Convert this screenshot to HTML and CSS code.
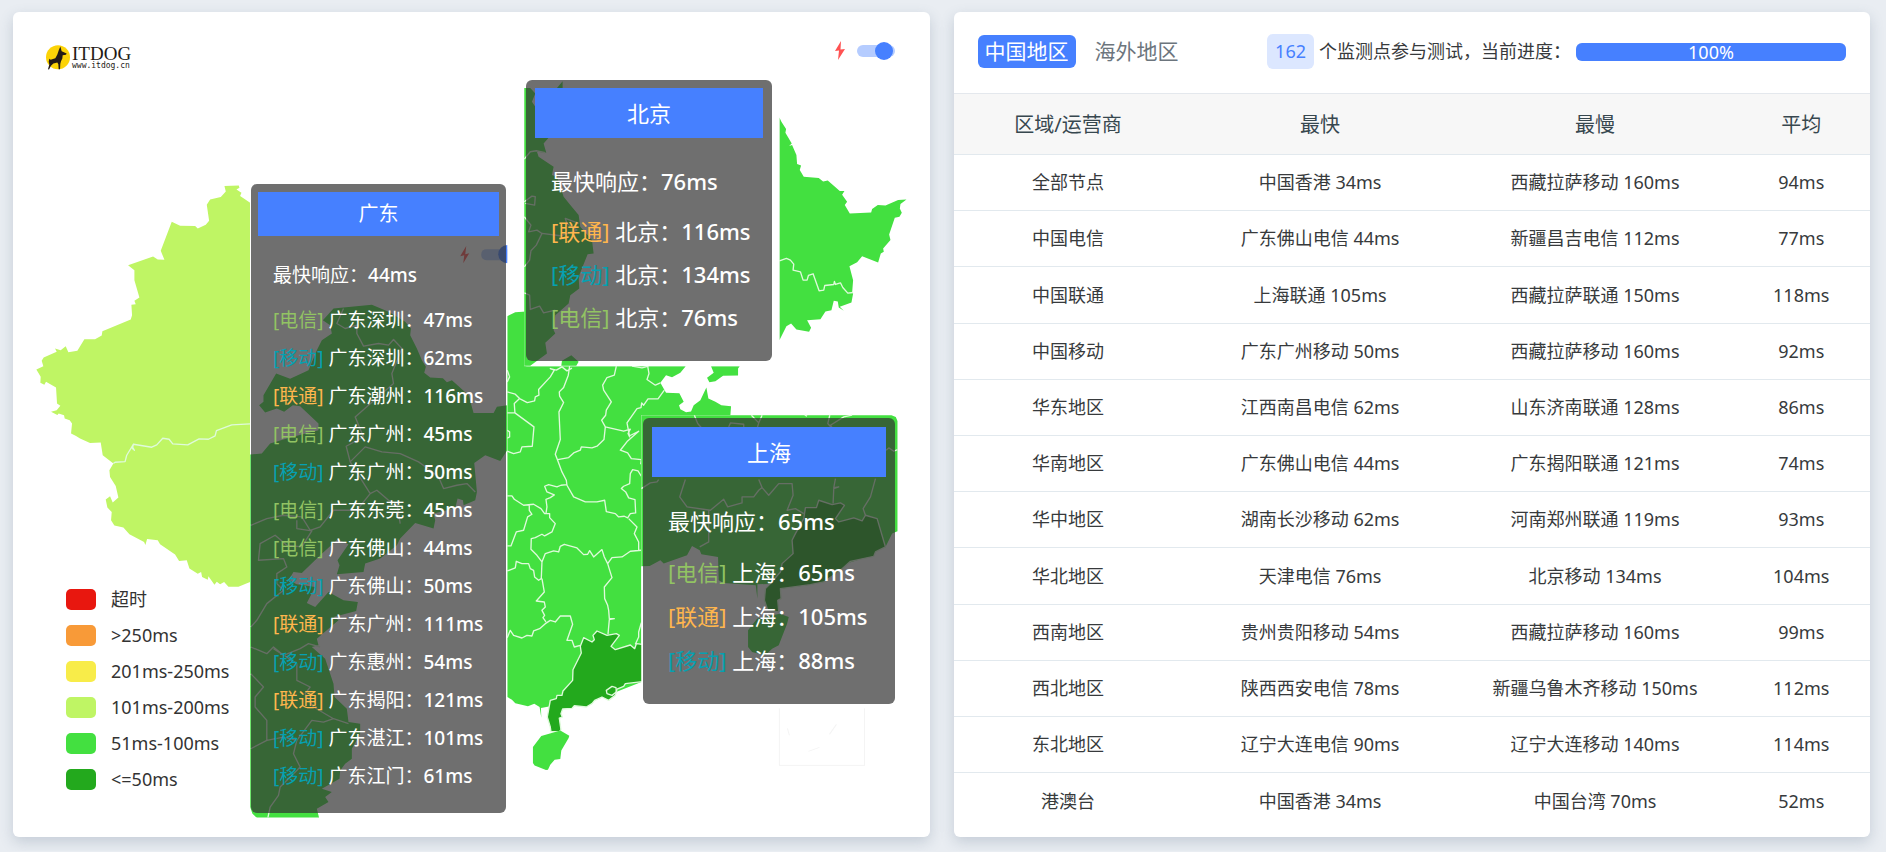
FILE: index.html
```html
<!DOCTYPE html>
<html lang="zh-CN">
<head>
<meta charset="utf-8">
<title>ITDOG</title>
<link rel="stylesheet" href="styles.css">
</head>
<body>
<main class="page">
  <section class="card map-card">
    <svg class="map" viewBox="13 12 916 824" aria-hidden="true">
      <defs>
        <clipPath id="clip-south"><rect x="250" y="184" width="257" height="633"/></clipPath>
      </defs>

      <!-- West -->
      <g transform="scale(.33333)">
        <path class="lime" d="M750,608 L720,588 724,578 709,568 718,563 716,556 673,558 677,574 662,591 630,598 620,614 627,662 617,674 593,685 585,678 540,677 515,665 482,752 493,779 473,778 459,769 384,795 403,810 403,840 418,892 403,902 407,912 394,914 396,945 392,958 307,993 305,1006 285,1017 253,1017 232,1052 205,1056 197,1038 182,1050 165,1045 170,1055 131,1072 125,1082 130,1098 109,1108 122,1130 121,1148 133,1154 138,1145 168,1162 171,1210 181,1217 170,1230 153,1235 172,1244 176,1240 192,1245 194,1255 209,1260 216,1270 213,1300 228,1307 240,1315 270,1328 302,1327 308,1365 340,1390 328,1410 330,1430 347,1457 355,1492 338,1507 330,1488 317,1498 322,1522 335,1535 333,1560 343,1576 370,1582 388,1602 432,1625 436,1634 441,1616 473,1620 480,1632 525,1663 537,1682 560,1680 568,1705 593,1720 603,1715 606,1730 623,1738 625,1728 643,1753 650,1744 660,1752 672,1745 685,1759 715,1759 735,1751 750,1745Z"/>
        <path class="edge" d="M340,1390 L345,1386 375,1384 380,1365 400,1332 397,1345 403,1350 397,1340 400,1332 455,1341 470,1334 488,1314 507,1317 518,1331 563,1334 597,1316 625,1317 645,1307 649,1291 695,1274 750,1271"/>
      </g>

      <!-- North-east -->
      <g transform="translate(500 60) scale(.33333)">
        <path class="green" d="M837,172 L843,185 857,207 855,218 874,250 866,258 875,255 888,285 890,312 902,316 898,330 910,350 955,354 968,364 982,361 1018,393 1032,393 1025,404 1040,425 1033,435 1048,460 1112,457 1115,447 1132,435 1155,436 1193,420 1218,418 1200,432 1198,445 1204,458 1197,470 1183,473 1166,523 1170,540 1148,565 1150,575 1141,580 1133,607 1085,588 1070,606 1047,618 1058,660 1055,698 1058,700 1053,727 1018,740 1030,752 1015,742 1012,724 1000,722 993,750 975,754 960,777 920,780 932,803 926,815 888,808 872,790 858,798 837,840Z"/>
        <path class="edge" d="M837,602 L858,595 870,600 880,612 878,630 900,635 908,660 920,660 924,646 938,641 956,692 970,690 973,676 1000,673 1002,664 1005,673 1020,668 1027,682 1042,699 1058,697"/>
        <path class="green" d="M632,918 L640,938 620,953 627,966 645,963 668,947 713,946 713,925 718,918Z"/>
      </g>

      <!-- Centre and south -->
      <g transform="translate(500 350) scale(.33333)">
        <path class="green" d="M21,-102 L45,-114 78,-116 78,48 556,48 540,68 515,81 497,75 480,98 497,128 537,129 550,155 536,165 540,177 557,186 572,184 580,165 600,150 618,112 624,145 645,155 663,165 692,168 690,195 423,195 423,995 258,1060 150,1068 122,1073 123,1102 118,1070 102,1060 83,1068 45,1059 35,1048 21,1040Z"/>
        <path class="dark edged" d="M426,882 L408,880 403,895 390,884 345,898 332,888 357,855 348,850 320,855 290,842 278,855 282,868 275,875 250,862 240,888 243,908 218,958 217,990 188,1022 185,1035 170,1035 168,1045 150,1050 141,1100 150,1130 152,1144 178,1143 182,1138 177,1103 186,1100 182,1090 187,1076 215,1074 222,1066 258,1070 275,1060 283,1050 305,1040 325,1050 345,1035 350,1016 370,1008 375,1000 426,994Z"/>
        <path class="green" d="M180,1140 L207,1156 205,1163 183,1200 180,1226 163,1228 150,1243 143,1258 137,1259 103,1245 98,1238 98,1190 123,1157Z"/>
        <path class="edge" d="M21,125 L45,132 58,145 81,157 103,152 105,140 116,135 115,118 150,80 162,60 150,55 168,60 185,50 200,62 215,54
          M208,48 L204,75 190,112 177,125 178,138 190,157 176,185 180,268 165,312 172,330 185,365 198,390 200,405 220,440 255,455 290,455 313,450 318,484 345,490 355,500 372,498 382,503 390,490 406,488 404,448 385,443 376,425 363,415 370,408 388,400 390,370 397,358 413,362 423,378
          M348,48 L342,75 320,82 307,105 310,120 333,155 318,180 316,195 304,210 315,230 311,268 290,288 275,293 243,290 240,300 220,308 205,322 172,328
          M315,230 L370,243 390,237 383,250 388,260 380,218 410,175 422,172 424,158 430,165 443,146 473,146 492,120
          M385,258 L415,243 382,272 360,300 382,308 393,325 423,328 421,342
          M58,145 L42,160 44,188 21,188 M44,188 L101,230 96,288 65,290 60,305 40,310 21,303
          M21,240 L28,245 28,260 21,264 M21,60 L28,80 21,95
          M200,403 L182,405 170,410 145,403 133,408 140,425 162,434 150,442 137,447 140,470 137,490
          M21,437 L35,437 42,447 70,465 100,462 122,475 133,490 148,490 148,502 165,520 155,545 133,557 125,552 105,562 93,565 92,597 110,615 125,635
          M87,465 L87,480 95,492 82,500 70,540 48,545 32,587 21,587
          M21,662 L45,653 48,633 65,640 85,640 90,655 100,660 103,680 115,690 123,685 125,635 135,610 160,602 175,605 180,588 192,582 230,593 250,613 262,612 268,601 280,620 305,598 312,620 322,640 335,622 365,620 390,603 423,600
          M385,505 L410,530 402,550 415,575 415,600
          M322,640 L335,682 312,710 313,745 322,765 325,780 327,805 342,805 327,808 323,852
          M125,685 L132,725 108,752 132,755 135,770 125,780 133,795 128,802 137,815
          M21,862 L30,840 40,855 65,863 80,855 95,857 100,842 118,835 135,820 150,810 165,815 180,797 210,797 217,822 200,870 215,870 222,890 240,885
          M423,817 L415,845 415,860 405,882
          M442,48 L446,70 440,88 465,105 480,98 M395,48 L425,53 445,48
          M320,1030 L318,1020 335,1008 347,1012 348,1025 335,1035Z"/>
      </g>

      <!-- Islands inset -->
      <rect class="inset" x="779" y="700" width="85" height="65"/>
      <path class="inset" d="M787,728 l2,7 M836,724 l-7,10 M808,751 l11,-4"/>

      <!-- Guangdong view -->
      <rect class="blank" x="250" y="184" width="257" height="633"/>
      <g clip-path="url(#clip-south)">
        <g transform="scale(.33333)">
          <path class="green" d="M1115,914 L1165,935 1215,965 1232,985 1230,1005 1250,1045 1265,1080 1277,1100 1272,1118 1290,1132 1328,1134 1340,1146 1355,1140 1405,1185 1420,1238 1480,1238 1490,1220 1521,1215 1521,1350 1500,1382 1455,1365 1422,1388 1430,1475 1425,1500 1390,1515 1388,1500 1372,1495 1366,1520 1340,1530 1300,1540 1305,1560 1300,1585 1245,1568 1200,1615 1190,1635 1140,1675 1095,1690 1090,1715 1010,1722 1018,1695 1012,1680 1045,1632 1012,1618 960,1665 905,1718 880,1715 865,1740 890,1752 945,1760 920,1808 945,1820 985,1775 1030,1800 1073,1805 1068,1832 1000,1850 1015,1860 950,1915 955,1935 935,1940 975,1975 1000,2050 1003,2090 1040,2125 1045,2165 1080,2170 1080,2200 1055,2245 1055,2275 1035,2290 1020,2310 1018,2335 965,2365 995,2375 975,2390 985,2405 950,2425 957,2453 771,2453 757,2440 750,2420 750,1363 785,1360 810,1330 870,1312 955,1290 955,1270 900,1218 878,1215 852,1235 830,1225 795,1237 777,1215 790,1205 790,1185 828,1120 870,1136 925,1110 950,1050 965,1020 995,1000 990,975 968,960 1000,925 1030,922Z"/>
          <path class="edge" d="M1030,925 L1010,970 1035,985 1070,975 1070,1000 1090,1038 1135,1030 1165,1035 1180,1018 1205,1045 1175,1120 1180,1150 1105,1215 1065,1250 1090,1310 1038,1338 1050,1385 1095,1340 1145,1355 1200,1360 1255,1385 1290,1410 1315,1430 1330,1465 1370,1455 1400,1450 1425,1475
            M1050,1385 L1110,1480 1130,1470 1165,1500 1190,1510 1200,1570
            M1110,1480 L1070,1530 1000,1530 960,1580 930,1590 905,1550 850,1545 800,1555 752,1575
            M890,1560 L890,1585 935,1592 905,1640 860,1635 825,1605 780,1630 775,1680 850,1675 860,1700 830,1720 830,1750 850,1770 800,1810 770,1860 752,1880
            M752,1940 L800,1960 820,1940 850,1965 900,1945 925,1930 960,1940
            M820,1945 L890,1990 890,2040 930,2060 915,2080 940,2120 1000,2155 1045,2170
            M752,2020 L790,2060 765,2090 765,2120 800,2160 800,2220 752,2245
            M800,2220 L850,2210 890,2220 935,2160 970,2165 1000,2155
            M890,2220 L880,2260 900,2300 880,2320 840,2360 835,2385 810,2420 803,2453"/>
        </g>
        <rect class="track" x="481" y="249" width="36" height="11" rx="5"/>
        <circle class="knob" cx="507" cy="254" r="9"/>
        <path class="bolt" d="M466,246 L460,256 464,255 463,263 469,253 465,254Z"/>
      </g>

      <!-- Beijing view -->
      <rect class="blank" x="524" y="80" width="255" height="286"/>
      <g transform="translate(500 60) scale(.33333)">
        <path class="green" d="M72,84 L90,84 105,100 95,125 105,140 105,230 145,233 130,250 138,278 110,275 115,290 160,320 155,345 170,350 190,410 210,435 235,465 240,500 275,540 280,580 262,582 235,650 237,685 210,705 205,730 165,765 160,810 165,820 135,848 140,880 90,917 72,917Z M170,84 L187,64 187,90Z M183,917 L185,902 213,885 235,905 228,917Z"/>
        <path class="edge" d="M72,297 L90,275 108,272 135,278 M72,425 L95,408 105,410 103,435 75,430 M72,470 L92,495 85,515 110,510 125,520 108,555 92,572 88,600 72,620 M72,698 L88,705 90,748 118,738 130,758 165,750 M125,520 L180,527 230,510 200,490 195,475 235,490"/>
      </g>

      <!-- Shanghai view -->
      <rect class="blank" x="641" y="415" width="256" height="293"/>
      <g transform="translate(490 400) scale(.33333)">
        <path class="green" d="M453,45 L1203,45 1216,50 1221,62 1221,393 1205,400 1185,440 1100,480 870,550 801,552 801,595 796,555 700,548 685,540 683,470 633,462 628,450 605,437 590,465 520,490 510,480 478,497 453,498Z"/>
        <path class="dark edged" d="M1185,440 L1160,355 1125,345 1115,362 1090,353 1045,365 1035,355 1062,315 1050,308 1025,313 985,300 978,322 945,322 940,355 915,400 905,420 908,460 875,490 870,515 840,550 825,565 822,600 832,630 865,635 862,600 872,595 870,565 960,553 1000,545 1050,510 1080,483 1150,468 1155,455Z"/>
        <path class="green" d="M868,640 L895,650 890,670 865,735 845,745 825,765 785,755 773,740 773,690 800,655Z"/>
        <path class="edge" d="M612,45 L622,70 635,85 M715,80 L720,68 760,72 760,82 M783,45 L805,68 800,85 M805,68 L815,45 M1085,45 L1060,50 1020,75 1030,90 1012,70 1018,45 M943,45 L950,48 M1187,150 L1195,143 1210,153 1221,148
          M453,265 L480,248 500,245 505,238 M585,238 L568,290 590,320 660,330 700,297 712,320 755,308 755,290 790,290 805,270 815,262 805,238 M815,262 L835,285 865,250 905,250 908,285 890,330 915,325 940,340 M1035,235 L1030,262 1045,260 1030,265 1028,310 M1155,235 L1140,290 1118,325 1125,345 M655,330 L655,425 628,440"/>
      </g>
    </svg>

    <a class="logo" href="#">
      <svg class="logo-mark" viewBox="0 0 72 74" aria-hidden="true">
        <circle cx="36" cy="36" r="36" fill="#fcd307"/>
        <path fill="#231a16" d="M43,4 L47,18 62,25 60,29 50,30 49,40 45,48 43,56 42,72 38,72 37,57 34,52 22,55 15,62 9,73 6,72 10,58 8,50 10,41 14,44 28,39 34,28 38,16Z"/>
      </svg>
      <span class="logo-text"><span class="logo-name">ITDOG</span><span class="logo-url">www.itdog.cn</span></span>
    </a>

    <label class="fast-toggle">
      <svg class="fast-icon" viewBox="0 0 10 20" aria-hidden="true"><path class="bolt" d="M6,0 L0,10 4,9.500 3,19 10,8 5.500,8.500Z"/></svg>
      <input class="switch" type="checkbox" role="switch" aria-label="快速模式" checked>
    </label>

    <ul class="legend">
      <li class="legend-item"><span class="swatch swatch-timeout"></span>超时</li>
      <li class="legend-item"><span class="swatch swatch-250"></span>&gt;250ms</li>
      <li class="legend-item"><span class="swatch swatch-201"></span>201ms-250ms</li>
      <li class="legend-item"><span class="swatch swatch-101"></span>101ms-200ms</li>
      <li class="legend-item"><span class="swatch swatch-51"></span>51ms-100ms</li>
      <li class="legend-item"><span class="swatch swatch-50"></span>&lt;=50ms</li>
    </ul>

    <div class="tip tip-guangdong">
      <h2 class="tip-title">广东</h2>
      <p class="tip-best">最快响应：<b>44ms</b></p>
      <ul class="tip-list">
        <li><span class="dx">[电信]</span> 广东深圳：<b>47ms</b></li>
        <li><span class="yd">[移动]</span> 广东深圳：<b>62ms</b></li>
        <li><span class="lt">[联通]</span> 广东潮州：<b>116ms</b></li>
        <li><span class="dx">[电信]</span> 广东广州：<b>45ms</b></li>
        <li><span class="yd">[移动]</span> 广东广州：<b>50ms</b></li>
        <li><span class="dx">[电信]</span> 广东东莞：<b>45ms</b></li>
        <li><span class="dx">[电信]</span> 广东佛山：<b>44ms</b></li>
        <li><span class="yd">[移动]</span> 广东佛山：<b>50ms</b></li>
        <li><span class="lt">[联通]</span> 广东广州：<b>111ms</b></li>
        <li><span class="yd">[移动]</span> 广东惠州：<b>54ms</b></li>
        <li><span class="lt">[联通]</span> 广东揭阳：<b>121ms</b></li>
        <li><span class="yd">[移动]</span> 广东湛江：<b>101ms</b></li>
        <li><span class="yd">[移动]</span> 广东江门：<b>61ms</b></li>
      </ul>
    </div>

    <div class="tip tip-large tip-beijing">
      <h2 class="tip-title">北京</h2>
      <p class="tip-best">最快响应：<b>76ms</b></p>
      <ul class="tip-list">
        <li><span class="lt">[联通]</span> 北京：<b>116ms</b></li>
        <li><span class="yd">[移动]</span> 北京：<b>134ms</b></li>
        <li><span class="dx">[电信]</span> 北京：<b>76ms</b></li>
      </ul>
    </div>

    <div class="tip tip-large tip-shanghai">
      <h2 class="tip-title">上海</h2>
      <p class="tip-best">最快响应：<b>65ms</b></p>
      <ul class="tip-list">
        <li><span class="dx">[电信]</span> 上海：<b>65ms</b></li>
        <li><span class="lt">[联通]</span> 上海：<b>105ms</b></li>
        <li><span class="yd">[移动]</span> 上海：<b>88ms</b></li>
      </ul>
    </div>
  </section>

  <section class="card result-card">
    <header class="result-head">
      <nav class="tabs">
        <button class="tab tab-active" type="button">中国地区</button>
        <button class="tab" type="button">海外地区</button>
      </nav>
      <div class="status">
        <span class="count">162</span>
        <span class="status-text" id="status-text">个监测点参与测试，当前进度：</span>
        <div class="progress" role="progressbar" aria-labelledby="status-text" aria-valuenow="100" aria-valuemin="0" aria-valuemax="100"><div class="progress-bar" style="width:100%">100%</div></div>
      </div>
    </header>
    <table class="result-table">
      <thead>
        <tr><th class="col-region">区域/运营商</th><th class="col-time">最快</th><th class="col-time">最慢</th><th class="col-avg">平均</th></tr>
      </thead>
      <tbody>
        <tr><td>全部节点</td><td>中国香港 34ms</td><td>西藏拉萨移动 160ms</td><td>94ms</td></tr>
        <tr><td>中国电信</td><td>广东佛山电信 44ms</td><td>新疆昌吉电信 112ms</td><td>77ms</td></tr>
        <tr><td>中国联通</td><td>上海联通 105ms</td><td>西藏拉萨联通 150ms</td><td>118ms</td></tr>
        <tr><td>中国移动</td><td>广东广州移动 50ms</td><td>西藏拉萨移动 160ms</td><td>92ms</td></tr>
        <tr><td>华东地区</td><td>江西南昌电信 62ms</td><td>山东济南联通 128ms</td><td>86ms</td></tr>
        <tr><td>华南地区</td><td>广东佛山电信 44ms</td><td>广东揭阳联通 121ms</td><td>74ms</td></tr>
        <tr><td>华中地区</td><td>湖南长沙移动 62ms</td><td>河南郑州联通 119ms</td><td>93ms</td></tr>
        <tr><td>华北地区</td><td>天津电信 76ms</td><td>北京移动 134ms</td><td>104ms</td></tr>
        <tr><td>西南地区</td><td>贵州贵阳移动 54ms</td><td>西藏拉萨移动 160ms</td><td>99ms</td></tr>
        <tr><td>西北地区</td><td>陕西西安电信 78ms</td><td>新疆乌鲁木齐移动 150ms</td><td>112ms</td></tr>
        <tr><td>东北地区</td><td>辽宁大连电信 90ms</td><td>辽宁大连移动 140ms</td><td>114ms</td></tr>
        <tr><td>港澳台</td><td>中国香港 34ms</td><td>中国台湾 70ms</td><td>52ms</td></tr>
      </tbody>
    </table>
  </section>
</main>
</body>
</html>
```
FILE: styles.css
```css
* { box-sizing: border-box; }

body {
  margin: 0;
  background: #e9edf2;
  color: #373a3c;
  font: 18px/27px "Noto Sans", "Noto Sans CJK SC", sans-serif;
}

ul, p, h2 { margin: 0; padding: 0; list-style: none; }

.page {
  display: grid;
  grid-template-columns: 1fr 1fr;
  gap: 24px;
  padding: 12px 16px 14px 13px;
}

.card {
  background: #fff;
  border-radius: 6px;
  box-shadow: 0 5px 14px rgba(69, 90, 120, .22);
}

/* Map */
.map-card { position: relative; }
.map { display: block; width: 100%; height: auto; border-radius: 6px; }
.lime { fill: #bff564; }
.green { fill: #43e040; }
.dark { fill: #23a91d; }
.edge, .edged { stroke: #dffadb; stroke-width: 4; stroke-linejoin: round; }
.edge { fill: none; }
.blank { fill: #fff; }
.inset { fill: none; stroke: #f4f4f4; }
.bolt { fill: #ff5252; }
.track { fill: #b5ccff; }
.knob { fill: #4680ff; }

.logo {
  position: absolute;
  top: 33px;
  left: 33px;
  display: flex;
  gap: 2px;
  color: #231a16;
  text-decoration: none;
}
.logo-mark { width: 24px; height: 25px; }
.logo-text { display: flex; flex-direction: column; }
.logo-name { font: 19px/18px "Liberation Serif", serif; }
.logo-url { font: 8px/6px "DejaVu Sans Mono", monospace; }

.fast-toggle {
  position: absolute;
  top: 29px;
  right: 35px;
  display: flex;
  align-items: center;
  gap: 12px;
}
.fast-icon { width: 10px; height: 20px; }
.switch {
  appearance: none;
  position: relative;
  width: 38px;
  height: 12px;
  margin: 0;
  border-radius: 6px;
  background: #b5ccff;
}
.switch::before {
  content: "";
  position: absolute;
  top: -3px;
  right: 2px;
  width: 18px;
  height: 18px;
  border-radius: 50%;
  background: #4680ff;
}

.legend {
  position: absolute;
  left: 53px;
  bottom: 44px;
  display: grid;
  gap: 9px;
  color: #333;
}
.legend-item { display: flex; align-items: center; gap: 15px; }
.swatch { width: 30px; height: 21px; border-radius: 5px; }
.swatch-timeout { background: #e8170f; }
.swatch-250 { background: #f89a38; }
.swatch-201 { background: #f8ec49; }
.swatch-101 { background: #bff564; }
.swatch-51 { background: #43e040; }
.swatch-50 { background: #23a91d; }

/* Region tooltips */
.tip {
  position: absolute;
  padding: 8px 7px 18px;
  border-radius: 6px;
  background: rgba(50, 50, 50, .7);
  color: #fff;
  font-size: 19px;
  line-height: 38px;
  white-space: nowrap;
}
.tip b { font-weight: 500; }
.tip-title {
  background: #4680ff;
  font-size: 20px;
  font-weight: 400;
  line-height: 44px;
  text-align: center;
}
.tip-best { padding: 20px 15px 7px; }
.tip-list { padding: 0 15px; }
.tip-large { padding: 8px 9px 22px; font-size: 22px; line-height: 43px; }
.tip-large .tip-title { font-size: 22px; line-height: 50px; }
.tip-large .tip-best { padding: 22px 16px 7px; }
.tip-large .tip-list { padding: 0 16px; }
.tip-guangdong { left: 238px; top: 172px; width: 255px; }
.tip-beijing { left: 513px; top: 68px; width: 246px; }
.tip-shanghai { left: 630px; top: 406px; width: 252px; padding-top: 9px; line-height: 44px; }
.dx { color: #92c363; }
.yd { color: #06a0b1; }
.lt { color: #ffb64d; }

/* Results */
.result-head {
  display: flex;
  align-items: center;
  justify-content: space-between;
  padding: 22px 24px 24px;
}
.tabs { display: flex; gap: 12px; }
.tab {
  padding: 0 7px;
  border: 0;
  border-radius: 6px;
  background: none;
  color: #6c757d;
  font: inherit;
  font-size: 21px;
  line-height: 33px;
}
.tab-active { background: #4680ff; color: #fff; }
.status { display: flex; align-items: center; gap: 5px; }
.count {
  padding: 0 8px;
  border-radius: 6px;
  background: #dce7ff;
  color: #4680ff;
  line-height: 35px;
}
.progress { width: 270px; border-radius: 6px; background: #e9ecef; }
.progress-bar {
  border-radius: 6px;
  background: #4680ff;
  color: #fff;
  line-height: 18px;
  text-align: center;
}

.result-table {
  width: 100%;
  height: 736px;
  margin-bottom: 8px;
  border-collapse: collapse;
  table-layout: fixed;
  text-align: center;
}
.result-table th {
  height: 61px;
  padding: 0;
  border-top: 1px solid #e4e8ed;
  background: #f7f7f7;
  color: #37474f;
  font-size: 20px;
  font-weight: 400;
}
.result-table td { height: 56px; padding: 0; border-top: 1px solid #e2e9ee; }
.col-region { width: 25%; }
.col-time { width: 30%; }
.col-avg { width: 15%; }
```
